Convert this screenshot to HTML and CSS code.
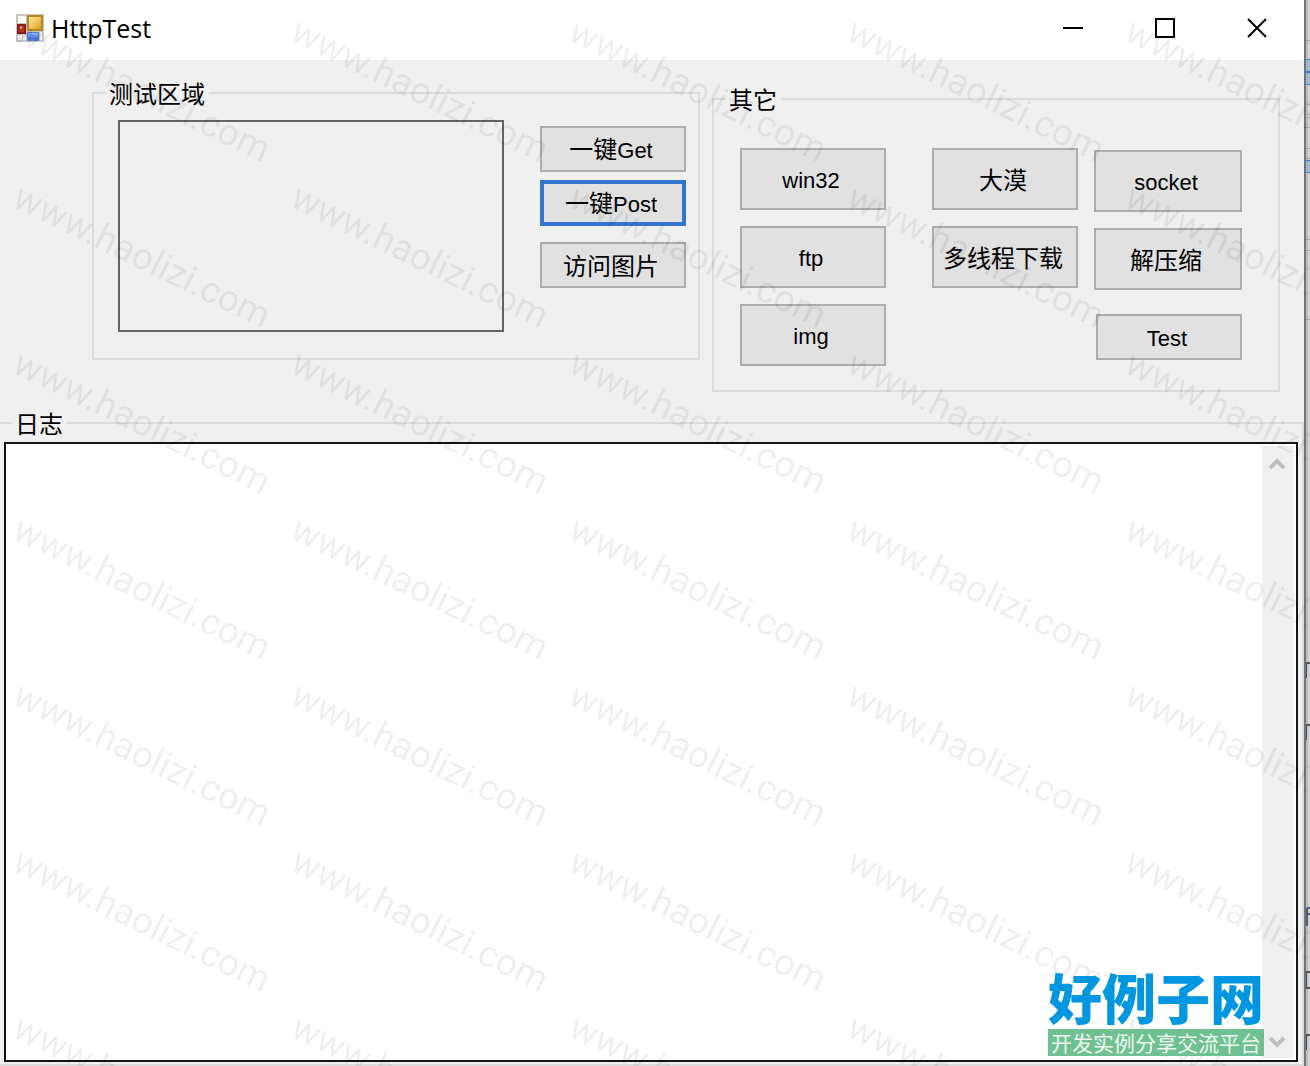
FILE: index.html
```html
<!DOCTYPE html>
<html lang="zh-CN">
<head>
    <meta charset="UTF-8">
    <meta name="viewport" content="width=device-width, initial-scale=1.0">
    <title>HttpTest</title>
    <link rel="stylesheet" href="styles.css">
</head>
<body>
    <main class="window">
        <header class="titlebar">
            <svg class="app-icon" width="28" height="28" viewBox="0 0 28 28" aria-hidden="true">
                <defs>
                    <linearGradient id="gold" x1="0" y1="0" x2="1" y2="1">
                        <stop offset="0" stop-color="#ffe9a0"/>
                        <stop offset="1" stop-color="#e0a020"/>
                    </linearGradient>
                    <linearGradient id="blue" x1="0" y1="0" x2="0" y2="1">
                        <stop offset="0" stop-color="#8fb4f5"/>
                        <stop offset="1" stop-color="#3f6fd8"/>
                    </linearGradient>
                </defs>
                <rect width="28" height="28" fill="#c6c6c6"/>
                <rect x="2" y="2" width="8" height="7" fill="#fafafa"/>
                <rect x="2" y="21" width="4" height="5" fill="#fafafa"/>
                <rect x="7" y="21" width="3" height="5" fill="#f0f0f0"/>
                <rect x="24" y="18" width="2" height="8" fill="#f0f0f0"/>
                <rect x="11" y="1" width="16" height="16" fill="#b58a1c"/>
                <rect x="13" y="3" width="12" height="12" fill="url(#gold)"/>
                <rect x="1" y="10" width="9" height="10" fill="#8e1d14"/>
                <rect x="3" y="12" width="5" height="6" fill="#b9382c"/>
                <rect x="4" y="12" width="2" height="3" fill="#e59a90"/>
                <rect x="11" y="18" width="12" height="9" fill="#5a7fd0"/>
                <rect x="12" y="19" width="10" height="6" fill="url(#blue)"/>
            </svg>
            <h1>HttpTest</h1>
            <div class="window-buttons">
                <button type="button" aria-label="最小化">
                    <svg width="20" height="20" viewBox="0 0 20 20"><path d="M0 10H20"/></svg>
                </button>
                <button type="button" aria-label="最大化">
                    <svg width="20" height="20" viewBox="0 0 20 20"><path d="M1 1H19V19H1Z"/></svg>
                </button>
                <button type="button" aria-label="关闭">
                    <svg width="20" height="20" viewBox="0 0 20 20"><path d="M1 1L19 19M19 1L1 19"/></svg>
                </button>
            </div>
        </header>

        <div class="groups">
            <fieldset class="group test-group">
                <legend>测试区域</legend>
                <div class="picture-box"></div>
                <div class="test-buttons">
                    <button type="button" class="btn">一键<span class="latin">Get</span></button>
                    <button type="button" class="btn focused">一键<span class="latin">Post</span></button>
                    <button type="button" class="btn">访问图片</button>
                </div>
            </fieldset>

            <fieldset class="group other-group">
                <legend>其它</legend>
                <div class="button-column first">
                    <button type="button" class="btn tall latin">win32</button>
                    <button type="button" class="btn tall latin">ftp</button>
                    <button type="button" class="btn tall latin">img</button>
                </div>
                <div class="button-column">
                    <button type="button" class="btn tall">大漠</button>
                    <button type="button" class="btn tall">多线程下载</button>
                </div>
                <div class="button-column last">
                    <button type="button" class="btn tall latin">socket</button>
                    <button type="button" class="btn tall">解压缩</button>
                    <button type="button" class="btn test latin">Test</button>
                </div>
            </fieldset>
        </div>

        <fieldset class="group log-group">
            <legend>日志</legend>
            <div class="log-box">
                <textarea aria-label="日志"></textarea>
                <div class="scrollbar" aria-hidden="true">
                    <svg width="16" height="14" viewBox="0 0 16 14"><path d="M1 11L8 4L15 11"/></svg>
                    <svg width="16" height="14" viewBox="0 0 16 14"><path d="M1 3L8 10L15 3"/></svg>
                </div>
            </div>
        </fieldset>
    </main>

    <!-- edge of the window behind -->
    <aside class="behind" aria-hidden="true">
        <svg width="4" height="1066">
            <rect y="59" width="4" height="26" fill="#9dbbd8"/>
            <rect y="160" width="4" height="12" fill="#9dbbd8"/>
            <path d="M0 59.5H4M0 84.5H4M0 160.5H4M0 172.5H4" stroke="#3f80c8"/>
            <path d="M0 72H4" stroke="#3f80c8" stroke-width="2"/>
            <path d="M0 40.5H4M0 104.5H4M0 114.5H4M0 117.5H4M0 127.5H4M0 148.5H4M0 158.5H4M0 239.5H4M0 250.5H4M0 319.5H4" stroke="#a4a4a4"/>
            <path d="M0 663H4M0 725H4M0 1035H4M0 972H4M0 988H4" stroke="#555" stroke-width="2"/>
            <path d="M1 908V926M0 914H4M1 908H4" stroke="#4a6078" stroke-width="2"/>
            <path d="M0 663V678M0 725V740M0 972V988M0 1035V1050" stroke="#3a5878" stroke-width="2"/>
        </svg>
    </aside>

    <div class="watermark" id="watermark" aria-hidden="true"></div>

    <div class="site-logo">
        <div class="site-name">好例子网</div>
        <div class="site-slogan">开发实例分享交流平台</div>
    </div>

    <script>
        const watermark = document.getElementById('watermark');
        for (let i = 0; i < 35; i++) {
            const mark = document.createElement('span');
            mark.innerText = 'www.haolizi.com';
            watermark.appendChild(mark);
        }
    </script>
</body>
</html>
```
FILE: styles.css
```css
* {
    box-sizing: border-box;
}
body {
    position: relative;
    display: flex;
    min-height: 100vh;
    margin: 0;
    overflow: hidden;
    background-color: #d0d0d0;
    color: #000;
    font-family: "Liberation Sans", "Noto Sans CJK SC", sans-serif;
    font-size: 24px;
    line-height: 24px;
}
.window {
    flex: 1;
    display: flex;
    flex-direction: column;
    min-width: 0;
    border-right: 2px solid #747474;
    background-color: #f0f0f0;
}
.titlebar {
    display: flex;
    align-items: center;
    height: 60px;
    padding: 0 1px 4px 16px;
    background-color: #fff;
}
.titlebar h1 {
    flex: 1;
    margin: 0 0 0 7px;
    font-family: "Open Sans", "Noto Sans", sans-serif;
    font-size: 25px;
    font-weight: normal;
}
.window-buttons {
    display: flex;
}
.window-buttons button {
    width: 92px;
    height: 56px;
    padding: 0;
    border: 0;
    background: none;
}
.window-buttons svg {
    display: block;
    margin: 0 auto;
    fill: none;
    stroke: #000;
    stroke-width: 2;
}
.groups {
    display: grid;
    grid-template-columns: 608fr 568fr;
    align-items: start;
    gap: 12px;
    padding: 21px 24px 19px 92px;
}
.group {
    min-width: 0;
    margin: 0;
    border: 2px solid #dcdcdc;
}
.group legend {
    height: 24px;
    padding: 0 4px 0 3px;
    line-height: 28px;
}
.test-group {
    display: flex;
    gap: 36px;
    padding: 15px 12px 26px 24px;
}
.test-group legend {
    margin-left: -12px;
}
.picture-box {
    flex: 1;
    height: 212px;
    border: 2px solid #646464;
}
.test-buttons {
    display: flex;
    flex-direction: column;
    width: 146px;
    padding-top: 6px;
}
.btn {
    height: 46px;
    padding: 3px 4px 0 0;
    border: 2px solid #adadad;
    background-color: #e1e1e1;
    color: #000;
    font-family: inherit;
    font-size: 24px;
    line-height: 24px;
    white-space: nowrap;
}
.btn.focused {
    margin: 8px 0 16px;
    border: 4px solid #3276d2;
}
.btn.tall {
    height: 62px;
}
.btn.latin,
.btn .latin {
    font-size: 22px;
}
.other-group {
    display: flex;
    margin-top: 6px;
    padding: 37px 36px 24px 26px;
}
.other-group legend {
    margin-left: -14px;
}
.button-column {
    flex: 146;
    display: flex;
    flex-direction: column;
    gap: 16px;
}
.button-column.first {
    margin-right: 46px;
}
.button-column.last {
    flex: 148;
    margin-left: 16px;
    padding-top: 2px;
}
.btn.test {
    margin: 8px 0 0 2px;
}
.log-group {
    flex: 1;
    display: flex;
    padding: 7px 4px 2px;
    border-left: 0;
}
.log-group legend {
    margin-left: 8px;
}
.log-box {
    flex: 1;
    display: flex;
    padding: 2px;
    border: 2px solid #141414;
    background-color: #fff;
}
.log-box textarea {
    flex: 1;
    margin: 0;
    padding: 4px;
    border: 0;
    outline: 0;
    resize: none;
    background: none;
    font: inherit;
}
.scrollbar {
    display: flex;
    flex-direction: column;
    align-items: center;
    justify-content: space-between;
    width: 32px;
    padding: 11px 2px 9px 0;
    background-color: #f0f0f0;
}
.scrollbar svg {
    fill: none;
    stroke: #bfbfbf;
    stroke-width: 4;
}
.behind {
    width: 4px;
    overflow: hidden;
    background: linear-gradient(to right, #b8b8b8, #d8d8d8);
}
.behind svg {
    position: absolute;
}
.watermark {
    position: absolute;
    inset: 0;
    display: grid;
    grid-template-columns: repeat(5, 278px);
    grid-auto-rows: 166px;
    padding: 12px 0 0 24px;
    overflow: hidden;
    pointer-events: none;
    color: rgba(0, 0, 0, 0.08);
    font-family: Roboto, sans-serif;
    font-size: 37px;
    line-height: 38px;
}
.watermark span {
    transform: rotate(26deg);
    transform-origin: 0 0;
    white-space: nowrap;
}
.site-logo {
    position: absolute;
    right: 46px;
    bottom: 10px;
    text-align: center;
    font-family: "Noto Sans CJK SC", sans-serif;
}
.site-name {
    padding-bottom: 3px;
    color: #0096e0;
    font-size: 54px;
    font-weight: 900;
    line-height: 58px;
}
.site-slogan {
    padding: 0 2px;
    background-color: #70c191;
    color: #eefaf2;
    font-size: 21px;
    line-height: 27px;
}
```
